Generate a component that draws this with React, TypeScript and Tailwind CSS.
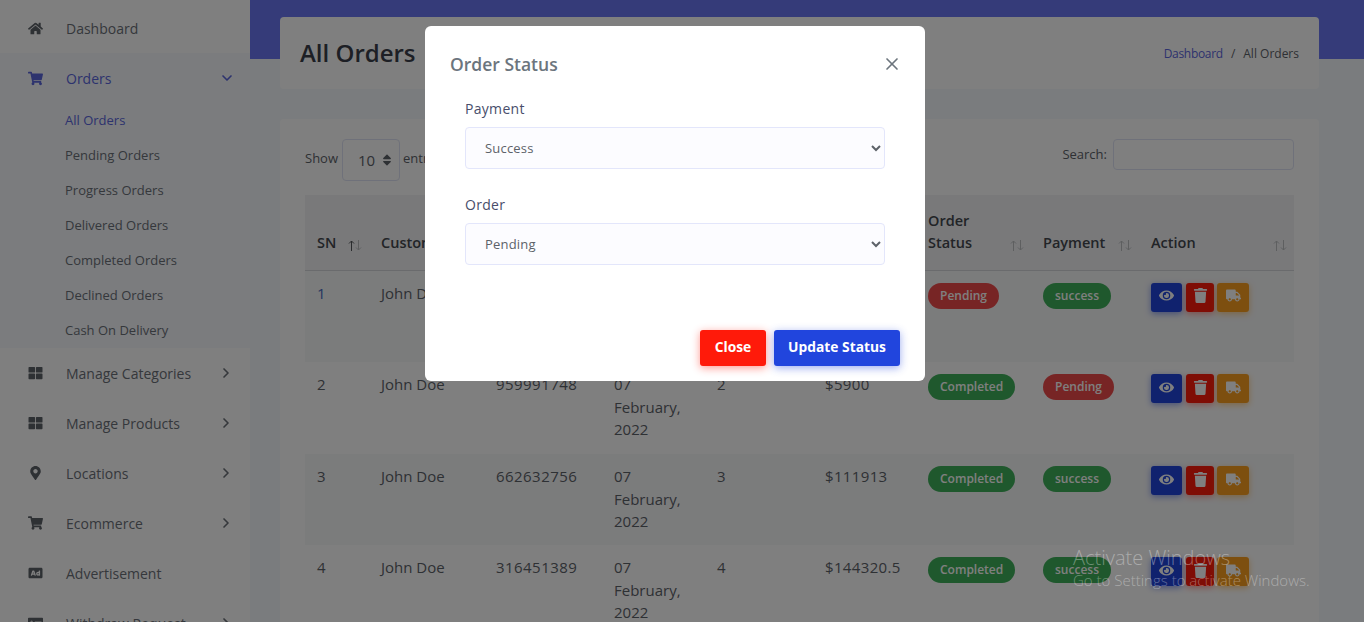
import { ChevronDown, ChevronRight, X } from "lucide-react";
import { FaAd, FaEye, FaHome, FaMapMarkerAlt, FaMoneyCheckAlt, FaShoppingCart, FaSort, FaThLarge, FaTrash, FaTruck } from "react-icons/fa";

const subLinks = ["All Orders", "Pending Orders", "Progress Orders", "Delivered Orders", "Completed Orders", "Declined Orders", "Cash On Delivery"];

const menuLinks = [
  { label: "Manage Categories", icon: FaThLarge, arrow: true },
  { label: "Manage Products", icon: FaThLarge, arrow: true },
  { label: "Locations", icon: FaMapMarkerAlt, arrow: true },
  { label: "Ecommerce", icon: FaShoppingCart, arrow: true },
  { label: "Advertisement", icon: FaAd, arrow: false },
  { label: "Withdraw Request", icon: FaMoneyCheckAlt, arrow: true },
];

const orders = [
  { sn: 1, phone: "845120367", qty: 1, amount: "$7420", status: "Pending", payment: "success" },
  { sn: 2, phone: "959991748", qty: 2, amount: "$5900", status: "Completed", payment: "Pending" },
  { sn: 3, phone: "662632756", qty: 3, amount: "$111913", status: "Completed", payment: "success" },
  { sn: 4, phone: "316451389", qty: 4, amount: "$144320.5", status: "Completed", payment: "success" },
];

const columns = [
  { label: "SN", width: "w-[64px]" },
  { label: "Customer", width: "w-[115px]" },
  { label: "Phone", width: "w-[118px]" },
  { label: "Date", width: "w-[103px]" },
  { label: "Qty", width: "w-[108px]" },
  { label: "Amount", width: "w-[103px]" },
  { label: "Order Status", width: "w-[115px]" },
  { label: "Payment", width: "w-[108px]" },
  { label: "Action", width: "w-[155px]" },
];

function Pill({ text }: { text: string }) {
  const good = text === "success" || text === "Completed";
  return (
    <span className={`inline-block h-[26px] rounded-full px-[12px] text-[12px] font-semibold leading-[25px] text-white ${good ? "bg-[#3eb05a]" : "bg-[#ee4a4a]"}`}>
      {text}
    </span>
  );
}

function SortArrows({ first }: { first?: boolean }) {
  return (
    <svg className="absolute bottom-[19px] right-[7px]" width="14" height="11" viewBox="0 0 14 11" fill="none" strokeWidth="1">
      <path d="M3.5 11V1M1 3.5 3.5 1 6 3.5" stroke={first ? "#55585c" : "#bcbec1"} />
      <path d="M10.5 0v10M8 7.5l2.5 2.5L13 7.5" stroke="#bcbec1" />
    </svg>
  );
}

export default function App() {
  return (
    <div className="relative flex h-[622px] overflow-hidden bg-[#f5f8fc] font-['Open_Sans',sans-serif] text-[14px] text-[#5d6269]">
      <aside className="w-[250px] shrink-0 bg-white pt-[3px] text-[#6b7078]">
        <a className="flex h-[50px] items-center pl-[28px]">
          <FaHome className="w-[15px] text-[15px] text-[#5d6269]" />
          <span className="ml-[23px]">Dashboard</span>
        </a>
        <div className="h-[295px] bg-[#f6f9fd]">
          <a className="flex h-[50px] items-center pl-[28px] pr-[15px] text-[#5b66dc]">
            <FaShoppingCart className="w-[15px] text-[15px]" />
            <span className="ml-[23px] flex-1">Orders</span>
            <ChevronDown size={16} strokeWidth={2.5} />
          </a>
          <ul className="text-[13px]">
            {subLinks.map((l, i) => (
              <li key={l} className={`flex h-[35px] items-center pl-[65px] ${i === 0 ? "text-[#5b66dc]" : ""}`}>{l}</li>
            ))}
          </ul>
        </div>
        {menuLinks.map((m) => (
          <a key={m.label} className="flex h-[50px] items-center pl-[28px] pr-[16px]">
            <m.icon className="w-[15px] text-[14px] text-[#5d6269]" />
            <span className="ml-[23px] flex-1">{m.label}</span>
            {m.arrow && <ChevronRight size={16} strokeWidth={2.5} />}
          </a>
        ))}
      </aside>

      <main className="relative min-w-0 flex-1 pl-[30px] pr-[45px] pt-[17px]">
        <div className="absolute inset-x-0 top-0 h-[59px] bg-[#6a76f2]" />
        <section className="relative flex h-[72px] items-center justify-between rounded-[4px] bg-white px-[20px]">
          <h1 className="text-[24px] font-semibold text-[#3a3f4a]">All Orders</h1>
          <nav className="pt-[2px] text-[12px]">
            <span className="tracking-[-0.3px] text-[#5b66dc]">Dashboard</span>
            <span className="mx-[8px]">/</span>
            <span>All Orders</span>
          </nav>
        </section>

        <section className="relative mt-[30px] h-[600px] rounded-[4px] bg-white px-[25px] pt-[20px]">
          <div className="flex h-[42px] items-center justify-between">
            <div className="flex items-center gap-[3px] text-[13px]">
              <span className="-mt-[2px] mr-[1px]">Show</span>
              <div className="flex h-[42px] w-[58px] items-center gap-[5px] rounded-[4px] border border-[#dfe2f4] pl-[15px] text-[15px]">
                10 <FaSort className="text-[14px]" />
              </div>
              <span className="-mt-[2px]">entries</span>
            </div>
            <label className="-mt-[12px] flex items-center gap-[6px] text-[13px]">
              <span className="mt-[2px]">Search:</span>
              <input className="h-[31px] w-[181px] rounded-[4px] border border-[#dfe2f4]" />
            </label>
          </div>

          <table className="mt-[14px] w-[989px] table-fixed border-collapse text-[15px]">
            <thead className="bg-[#f2f3f5] text-[#44484f]">
              <tr className="h-[75px] border-b border-[#d5d7db]">
                {columns.map((c, i) => (
                  <th key={c.label} className={`${c.width} relative pb-[16px] pl-[12px] pr-[30px] pt-[12px] text-left align-bottom text-[14.5px] font-semibold leading-[22px]`}>
                    {c.label}
                    <SortArrows first={i === 0} />
                  </th>
                ))}
              </tr>
            </thead>
            <tbody>
              {orders.map((o) => (
                <tr key={o.sn} className={`align-top ${o.sn === 3 ? "h-[91px]" : "h-[92px]"} ${o.sn % 2 ? "bg-[#f7f8f9]" : ""}`}>
                  <td className={`px-[12px] pb-[12px] pt-[11px] ${o.sn === 1 ? "text-[#4a6cc0]" : ""}`}>{o.sn}</td>
                  <td className="px-[12px] pb-[12px] pt-[11px]">John Doe</td>
                  <td className="px-[12px] pb-[12px] pt-[11px] tracking-[0.45px]">{o.phone}</td>
                  <td className="px-[12px] pb-[12px] pt-[11px] leading-[22.5px]">07 February, 2022</td>
                  <td className="px-[12px] pb-[12px] pt-[11px]">{o.qty}</td>
                  <td className="px-[12px] pb-[12px] pt-[11px] tracking-[0.35px]">{o.amount}</td>
                  <td className="p-[12px]"><Pill text={o.status} /></td>
                  <td className="p-[12px]"><Pill text={o.payment} /></td>
                  <td className="p-[12px]">
                    <div className="flex text-white">
                      <span className="flex h-[29px] w-[31px] items-center justify-center rounded-[3px] bg-[#2145dd] pb-[3px] text-[15px] shadow-[0_2px_6px_rgba(33,69,221,0.5)]"><FaEye /></span>
                      <span className="ml-[4px] flex h-[29px] w-[28px] items-center justify-center rounded-[3px] bg-[#ff1a0a] pb-[3px] text-[15px] shadow-[0_2px_6px_rgba(255,26,10,0.4)]"><FaTrash /></span>
                      <span className="ml-[3px] flex h-[29px] w-[32px] items-center justify-center rounded-[3px] bg-[#fb9f1f] pb-[3px] text-[15px] shadow-[0_2px_6px_rgba(251,159,31,0.5)]"><FaTruck /></span>
                    </div>
                  </td>
                </tr>
              ))}
            </tbody>
          </table>
        </section>
      </main>

      <div className="absolute inset-0 bg-black/50">
        <div className="ml-[425px] mt-[26px] flex h-[355px] w-[500px] flex-col rounded-[6px] bg-white px-[25px] pb-[15px] pt-[25px]">
          <div className="flex items-center justify-between">
            <h2 className="text-[17.5px] font-semibold leading-[26px] text-[#6c757d]">Order Status</h2>
            <X size={20} strokeWidth={2} className="-mr-[2px] text-[#6c757d]" />
          </div>
          <div className="px-[15px] pt-[21px] text-[#484e6b]">
            <label className="block text-[14px] leading-[21px] tracking-[0.3px]">Payment</label>
            <select defaultValue="Success" className="mt-[8px] h-[42px] w-full rounded-[4px] border border-[#e3e6fb] bg-[#fcfcff] pl-[15px] text-[13px] tracking-[0.2px] text-[#5d6269]">
              <option>Success</option>
              <option>Pending</option>
            </select>
            <label className="mt-[25px] block text-[14px] leading-[21px] tracking-[0.3px]">Order</label>
            <select defaultValue="Pending" className="mt-[8px] h-[42px] w-full rounded-[4px] border border-[#e3e6fb] bg-[#fcfcff] pl-[15px] text-[13px] tracking-[0.2px] text-[#5d6269]">
              <option>Pending</option>
              <option>Completed</option>
            </select>
          </div>
          <div className="mt-auto flex justify-end gap-[8px] text-[13.8px] font-bold text-white">
            <button className="h-[36px] w-[66px] rounded-[3px] bg-[#ff1a0a] pb-[2px] shadow-[0_2px_8px_rgba(255,26,10,0.45)]">Close</button>
            <button className="h-[36px] w-[126px] rounded-[3px] bg-[#2145dd] pb-[2px] shadow-[0_2px_8px_rgba(33,69,221,0.45)]">Update Status</button>
          </div>
        </div>
      </div>

      <div className="pointer-events-none absolute left-[1073px] top-[545px] font-light text-white/35">
        <p className="text-[20px] leading-[25px]">Activate Windows</p>
        <p className="text-[15px] leading-[20px]">Go to Settings to activate Windows.</p>
      </div>
    </div>
  );
}
